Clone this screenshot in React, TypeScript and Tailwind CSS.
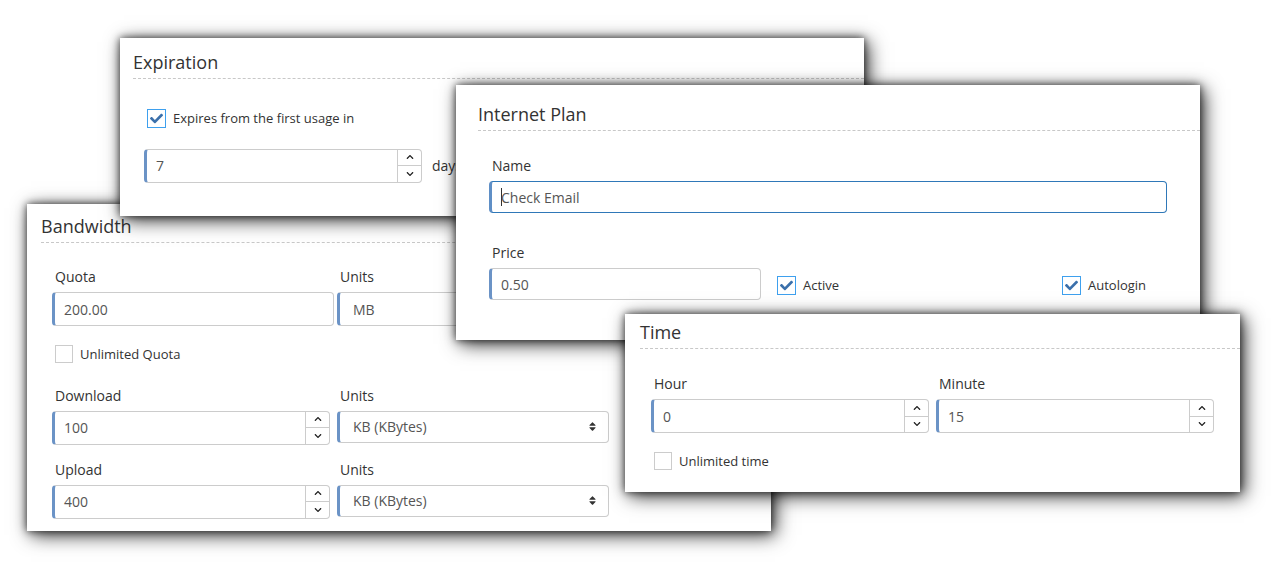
import React from "react";
import { FaCheck, FaChevronUp, FaChevronDown, FaSort } from "react-icons/fa";

const font = { fontFamily: '"Open Sans", "Noto Sans", sans-serif' };

function Spinner() {
  return (
    <div className="flex w-[24px] flex-col border border-l-0 border-[#ccc] rounded-r-[4px] bg-white text-[#222]">
      <div className="flex flex-1 items-center justify-center border-b border-[#ccc]">
        <FaChevronUp size={8} />
      </div>
      <div className="flex flex-1 items-center justify-center">
        <FaChevronDown size={8} />
      </div>
    </div>
  );
}

function Field({
  value,
  width,
  spinner,
  select,
  short,
}: {
  value: string;
  width: string;
  spinner?: boolean;
  select?: boolean;
  short?: boolean;
}) {
  return (
    <div className={`flex ${width} ${short ? "h-[32px]" : "h-[34px]"}`}>
      <div
        className={`flex flex-1 items-center border border-[#ccc] border-l-[3px] border-l-[#6b93c6] text-[14px] text-[#555] ${
          select ? "pl-[13px] pr-[10px]" : "pl-[9px] pr-[12px]"
        } ${spinner ? "rounded-l-[4px]" : "rounded-[4px]"}`}
      >
        <span className="flex-1">{value}</span>
        {select && <FaSort size={11} className="text-[#333]" />}
      </div>
      {spinner && <Spinner />}
    </div>
  );
}

function Check({ checked, label }: { checked?: boolean; label: string }) {
  return (
    <div className="flex items-center gap-[7px] text-[13px] text-[#333]">
      {checked ? (
        <div className="flex h-[19px] w-[19px] items-center justify-center border border-[#3ea0ee] bg-white text-[#3b70ab]">
          <FaCheck size={13} />
        </div>
      ) : (
        <div className="h-[18px] w-[18px] border border-[#ccc] bg-white" />
      )}
      <span className="pt-[1px]">{label}</span>
    </div>
  );
}

function Label({ children }: { children: React.ReactNode }) {
  return <div className="mb-[5px] pl-[3px] text-[14px] leading-[20px] text-[#333]">{children}</div>;
}

function Title({ children, className }: { children: React.ReactNode; className: string }) {
  return (
    <div className={`border-b border-dashed border-[#c8c8c8] pb-[3px] text-[18px] leading-[25px] text-[#333] ${className}`}>
      {children}
    </div>
  );
}

const cardShadow = "shadow-[0_0_8px_rgba(0,0,0,0.7),4px_4px_18px_rgba(0,0,0,0.8)]";

export default function App() {
  return (
    <div className="relative h-[582px] w-[1281px] overflow-hidden bg-white" style={font}>
      {/* Bandwidth */}
      <div className={`absolute left-[27px] top-[204px] z-10 h-[327px] w-[744px] bg-white ${cardShadow}`}>
        <Title className="ml-[14px] pt-[10px]">Bandwidth</Title>
        <div className="pl-[25px] pt-[24px]">
          <div className="flex gap-[3px]">
            <div>
              <Label>Quota</Label>
              <Field value="200.00" width="w-[282px]" />
            </div>
            <div>
              <Label>Units</Label>
              <Field value="MB" width="w-[272px]" select />
            </div>
          </div>
          <div className="mt-[18px] pl-[3px]">
            <Check label="Unlimited Quota" />
          </div>
          <div className="mt-[21px] flex gap-[7px]">
            <div>
              <Label>Download</Label>
              <Field value="100" width="w-[278px]" spinner />
            </div>
            <div>
              <Label>Units</Label>
              <Field value="KB (KBytes)" width="w-[272px]" select short />
            </div>
          </div>
          <div className="mt-[15px] flex gap-[7px]">
            <div>
              <Label>Upload</Label>
              <Field value="400" width="w-[278px]" spinner />
            </div>
            <div>
              <Label>Units</Label>
              <Field value="KB (KBytes)" width="w-[272px]" select short />
            </div>
          </div>
        </div>
      </div>

      {/* Expiration */}
      <div className={`absolute left-[120px] top-[38px] z-20 h-[178px] w-[744px] bg-white ${cardShadow}`}>
        <Title className="ml-[13px] pt-[12px]">Expiration</Title>
        <div className="pl-[24px] pt-[29px]">
          <div className="pl-[3px]">
            <Check checked label="Expires from the first usage in" />
          </div>
          <div className="mt-[20px] flex items-center gap-[10px]">
            <Field value="7" width="w-[278px]" spinner />
            <span className="text-[14px] text-[#333]">days</span>
          </div>
        </div>
      </div>

      {/* Internet Plan */}
      <div className={`absolute left-[456px] top-[85px] z-30 h-[255px] w-[744px] bg-white ${cardShadow}`}>
        <Title className="ml-[22px] pt-[17px]">Internet Plan</Title>
        <div className="pl-[33px] pt-[25px]">
          <Label>Name</Label>
          <div className="flex h-[32px] w-[678px] items-center rounded-[4px] border border-[#2f78b8] border-l-[3px] border-l-[#5f8fc6] pl-[9px] text-[14px] text-[#555]">
            <span className="-mr-[1px] h-[18px] w-[1px] bg-[#333]" />
            Check Email
          </div>
          <div className="mt-[30px]">
            <Label>Price</Label>
            <div className="flex items-center">
              <Field value="0.50" width="w-[272px]" short />
              <div className="ml-[16px] mt-[3px] w-[285px]">
                <Check checked label="Active" />
              </div>
              <div className="mt-[3px]">
                <Check checked label="Autologin" />
              </div>
            </div>
          </div>
        </div>
      </div>

      {/* Time */}
      <div className={`absolute left-[625px] top-[314px] z-40 h-[178px] w-[615px] bg-white ${cardShadow}`}>
        <Title className="ml-[15px] pt-[6px]">Time</Title>
        <div className="pl-[26px] pt-[25px]">
          <div className="flex gap-[7px]">
            <div>
              <Label>Hour</Label>
              <Field value="0" width="w-[278px]" spinner />
            </div>
            <div>
              <Label>Minute</Label>
              <Field value="15" width="w-[278px]" spinner />
            </div>
          </div>
          <div className="mt-[18px] pl-[3px]">
            <Check label="Unlimited time" />
          </div>
        </div>
      </div>
    </div>
  );
}
